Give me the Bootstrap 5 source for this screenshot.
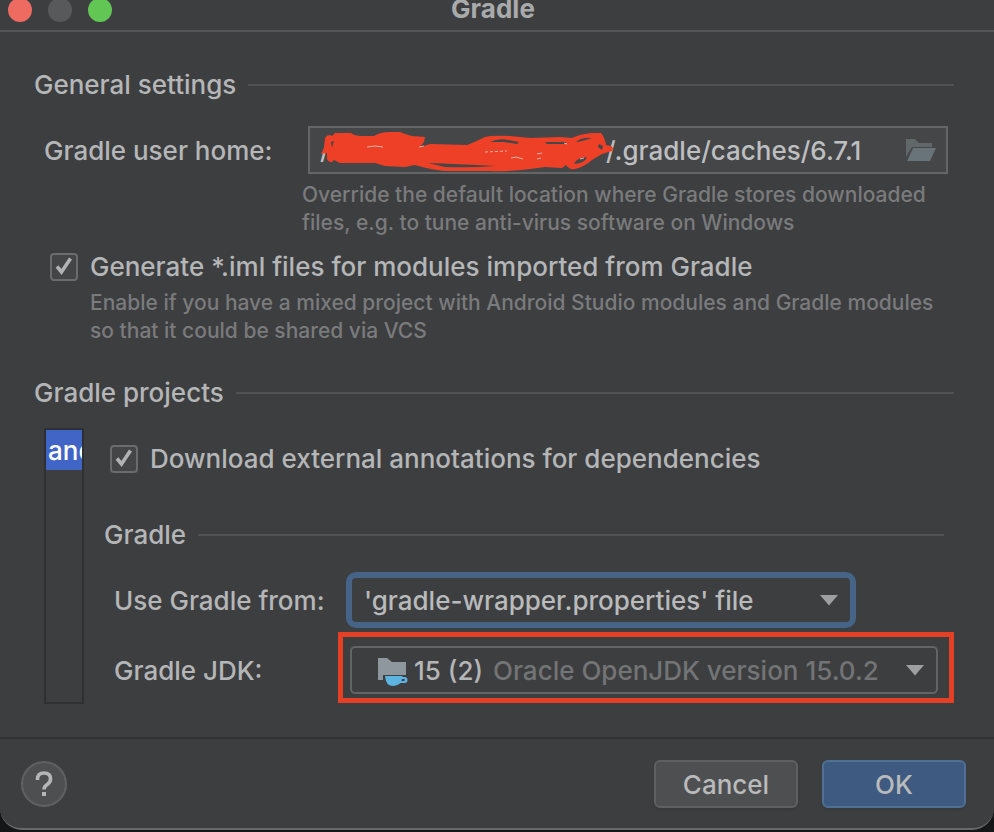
<!DOCTYPE html>
<html lang="en">
<head>
<meta charset="utf-8">
<meta name="viewport" content="width=device-width, initial-scale=1">
<title>Gradle</title>
<link href="https://cdn.jsdelivr.net/npm/bootstrap@5.3.0/dist/css/bootstrap.min.css" rel="stylesheet">
<style>
body { background: #151617; color: #b5b6b7; font-family: Inter, "Liberation Sans", sans-serif; font-size: 26px; font-weight: 500; line-height: 32px; }
.dialog { background: #3d3e40; border-bottom: 2px solid #66686a; border-radius: 0 0 22px 22px; min-height: calc(100vh - 2px); overflow: hidden; }
.titlebar { height: 32px; border-bottom: 2px solid #545657; }
.titlebar h1 { font-size: 26px; line-height: 32px; margin: -7px 0 0; font-weight: 700; color: #a9aaab; padding-right: 8px; }
.lights { left: 8px; top: -2px; gap: 16px; }
.light { width: 24px; height: 24px; border-radius: 50%; }
.light-close { background: #ed6b60; } .light-min { background: #58595b; } .light-zoom { background: #62c655; }
.content { padding: 37px 40px 32px 34px; }
.section-title { font-size: 26px; line-height: 32px; font-weight: 500; margin: 0; gap: 12px; }
.section-title::after { content: ""; flex: 1; height: 2px; background: #515254; }
.home-row { margin: 25px 6px 0 10px; }
.home-label { width: 264px; padding-top: 2px; }
.path-frame { height: 48px; border: 2px solid #646566; background: #454648; padding: 0 10px; color: #bebfc0; min-width: 0; }
.path-root { width: 286px; }
.plain-field { background: transparent; border: 0; color: inherit; font-weight: inherit; padding: 0; min-width: 0; width: 0; outline: 0; }
.path-input { padding-top: 2px; }
.scribble { left: 8px; top: 2px; width: 300px; height: 44px; }
.hint { font-size: 21px; line-height: 28px; color: #7a7b7c; margin: 0; }
.home-hint { margin: 7px 0 0 268px; }
.iml-row { margin: 14px 0 0 16px; gap: 12px; }
.iml-hint { margin: 6px 0 0 56px; }
.tick { appearance: none; width: 28px; height: 28px; flex: none; margin: 0; border: 2px solid #6a6b6c; border-radius: 4px; background: #434546 center/24px 24px no-repeat; }
.tick:checked { background-image: url("data:image/svg+xml,%3Csvg xmlns='http://www.w3.org/2000/svg' viewBox='0 0 24 24'%3E%3Cpath d='M5 11.500 9.500 17 18.500 3.500' fill='none' stroke='%23b1b2b3' stroke-width='3.6'/%3E%3C/svg%3E"); }
.projects-title { margin-top: 32px; }
.projects { margin: 19px 10px 0 10px; gap: 20px; }
.project-list { width: 40px; height: 276px; border: 2px solid #2f3031; }
.project-item { height: 40px; line-height: 42px; background: #4065c6; color: #fff; padding-left: 2px; text-align: left; white-space: nowrap; }
.details { padding-top: 15px; min-width: 0; }
.download-row { margin-left: 6px; gap: 12px; }
.gradle-title { margin-top: 44px; }
.from-row { margin: 21px 0 0 10px; }
.from-label { width: 232px; padding-top: 2px; }
.jdk-label { width: 224px; padding-top: 6px; }
.from-select { width: 510px; height: 56px; border: 6px solid #466388; border-radius: 10px; padding: 2px 12px 0; color: #b9babb; font-weight: inherit; appearance: none; outline: 0; background: #3d3e40 url("data:image/svg+xml,%3Csvg xmlns='http://www.w3.org/2000/svg' viewBox='0 0 18 11'%3E%3Cpath d='M0 0h18L9 10.5z' fill='%239d9fa0'/%3E%3C/svg%3E") right 12px center/18px 11px no-repeat; }
.jdk-row { margin: 4px -10px 0 10px; }
.marked { border: 5px solid #e54025; padding: 9px 11px 4px 7px; }
.jdk-frame { height: 48px; border: 2px solid #636465; border-radius: 5px; padding: 0 12px 0 24px; }
.jdk-icon { width: 34px; height: 32px; flex: none; }
.jdk-name, .jdk-select { padding-top: 2px; }
.jdk-name { margin: 0 10px 0 4px; }
.jdk-select { appearance: none; color: #737475; background: transparent url("data:image/svg+xml,%3Csvg xmlns='http://www.w3.org/2000/svg' viewBox='0 0 18 11'%3E%3Cpath d='M0 0h18L9 10.5z' fill='%239d9fa0'/%3E%3C/svg%3E") right center/18px 11px no-repeat; }
.footer-bar { border-top: 2px solid #303132; padding: 21px 28px 20px 21px; gap: 24px; }
.help { width: 46px; height: 46px; border-radius: 50%; border: 2px solid #606162; background: #4e4f50; color: #b4b5b6; padding: 0; }
.action { width: 144px; height: 48px; border: 2px solid #5e6061; border-radius: 6px; background: #4d4f50; color: #b9babb; font-weight: inherit; padding: 2px 0 0; box-shadow: 0 2px 2px #38393a; }
.action-ok { background: #3e5a80; border-color: #4e7096; }
</style>
<script src="https://cdn.jsdelivr.net/npm/bootstrap@5.3.0/dist/js/bootstrap.bundle.min.js"></script>
</head>
<body>
<main class="dialog d-flex flex-column">
  <header class="titlebar position-relative text-center">
    <div class="lights d-flex position-absolute"><span class="light light-close"></span><span class="light light-min"></span><span class="light light-zoom"></span></div>
    <h1>Gradle</h1>
  </header>

  <form class="content flex-grow-1">
    <h2 class="section-title d-flex align-items-center">General settings</h2>
    <div class="home-row d-flex align-items-center">
      <label class="home-label flex-shrink-0" for="home">Gradle user home:</label>
      <div class="path-frame position-relative d-flex align-items-center flex-grow-1">
        <span class="path-root flex-shrink-0">/</span>
        <input class="plain-field path-input flex-grow-1" id="home" type="text" value="/.gradle/caches/6.7.1">
        <button class="btn p-0 border-0 d-flex" type="button" aria-label="Browse">
          <svg width="30" height="24" viewBox="0 0 30 24"><path d="M0 1h9l4 4h13v4H6L0 19z" fill="#62676a"/><path d="M7 10h23l-6 13H1z" fill="#68737a"/></svg>
        </button>
        <svg class="scribble position-absolute" viewBox="318 130 300 44">
          <path fill="#ee4026" d="M321 154 324 148 325 138Q328 133 332 136L335 133H351Q354 136 362 136H374Q380 132 390 132H400Q408 135 412 136L425 137 424 142 420 147 430 144 467 145Q475 142 485 137 493 135 510 136L530 138 560 137 572 138Q580 134 592 133L601 133Q605 138 606 145L611 146Q614 148 612 151L602 154 592 160Q584 167 575 169 569 170 566 165L562 168 545 167 530 169Q510 172 488 171H450Q435 171 415 165L405 167 385 166 375 163H340L334 160Q330 165 327 159V153Z"/>
          <g fill="#454648">
            <path d="M331 142 334 141 333 144 332 148ZM490 142Q498 138 508 140L519 142 517 144 504 142ZM428 163Q455 164 496 166 470 168 445 167ZM545 142H566V144L547 144ZM576 142Q582 137 592 138L582 141ZM599 144 603 146 602 150 598 147ZM574 164Q576 158 587 157 585 163 574 164Z"/>
          </g>
          <g fill="none" stroke="#d8b5ac" stroke-width="1">
            <path d="M367 147 375 146 383 147M419 147 424 146M564 143 567 144M511 158 516 157 523 159M537 154 542 153M537 159 541 158M580 159 584 158"/>
            <path stroke-dasharray="3 2" d="M485 152 507 151"/>
          </g>
        </svg>
      </div>
    </div>
    <p class="hint home-hint">Override the default location where Gradle stores downloaded<br>files, e.g. to tune anti-virus software on Windows</p>
    <div class="iml-row d-flex align-items-center">
      <input class="tick" id="iml" type="checkbox" checked><label for="iml">Generate *.iml files for modules imported from Gradle</label>
    </div>
    <p class="hint iml-hint">Enable if you have a mixed project with Android Studio modules and Gradle modules<br>so that it could be shared via VCS</p>

    <h2 class="section-title projects-title d-flex align-items-center">Gradle projects</h2>
    <div class="projects d-flex">
      <div class="project-list overflow-hidden flex-shrink-0"><div class="project-item overflow-hidden">and</div></div>
      <div class="details flex-grow-1">
        <div class="download-row d-flex align-items-center">
          <input class="tick" id="download" type="checkbox" checked><label for="download">Download external annotations for dependencies</label>
        </div>
        <h3 class="section-title gradle-title d-flex align-items-center">Gradle</h3>
        <div class="from-row d-flex align-items-center">
          <label class="from-label flex-shrink-0" for="from">Use Gradle from:</label>
          <select class="from-select" id="from"><option>'gradle-wrapper.properties' file</option></select>
        </div>
        <div class="jdk-row d-flex align-items-center">
          <label class="jdk-label flex-shrink-0" for="jdk">Gradle JDK:</label>
          <div class="marked flex-grow-1">
            <div class="jdk-frame d-flex align-items-center">
              <svg class="jdk-icon" viewBox="0 0 34 32"><path d="M2 4h9l5 4h14v13H7v5H2z" fill="#8e979e"/><path d="M9 22h17.500v1h2a3 3 0 0 1 0 6h-4q-3 3-7 3-8 0-8.500-10z" fill="#5db4e0"/><path d="M26 25h2.500v2H25.500z" fill="#3d3e40"/></svg>
              <span class="jdk-name flex-shrink-0">15 (2)</span>
              <select class="plain-field jdk-select flex-grow-1" id="jdk"><option>Oracle OpenJDK version 15.0.2</option></select>
            </div>
          </div>
        </div>
      </div>
    </div>
  </form>

  <footer class="footer-bar d-flex align-items-center">
    <button class="help me-auto d-flex align-items-center justify-content-center" type="button" aria-label="Help">
      <svg width="18" height="26" viewBox="0 0 18 26"><path d="M2.500 9V8q0-6 6.500-6t6.500 6q0 3-3 5.300-3.500 2.200-3.500 5.200" fill="none" stroke="#b4b5b6" stroke-width="3.600"/><path d="M7 21h4v4H7z" fill="#b4b5b6"/></svg>
    </button>
    <button class="action" type="button">Cancel</button>
    <button class="action action-ok" type="submit">OK</button>
  </footer>
</main>
</body>
</html>
